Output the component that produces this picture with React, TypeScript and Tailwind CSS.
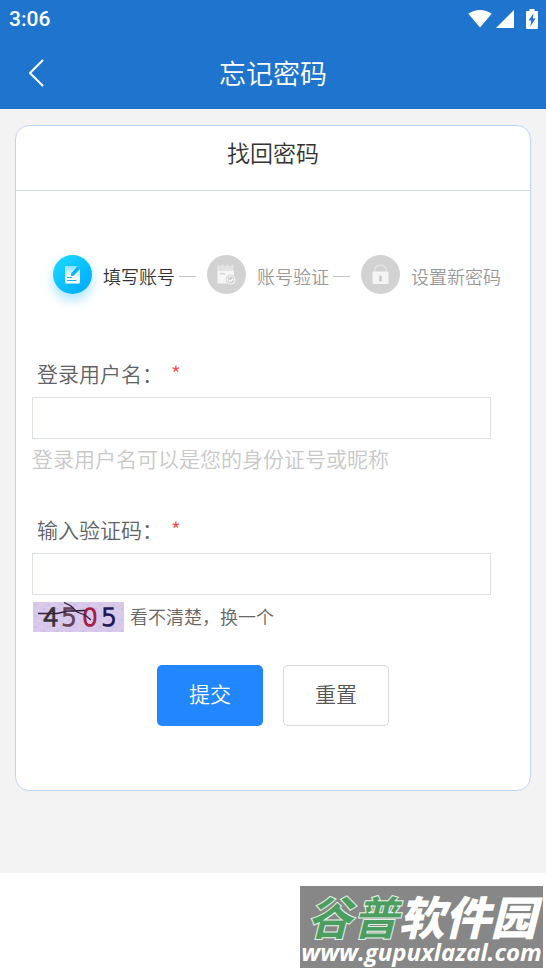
import { useState } from "react";
import type { ReactNode } from "react";

function WifiIcon() {
  return (
    <svg width="24" height="19" viewBox="0 0 24 19" aria-hidden="true">
      <path d="M0.3 4.8C7-.4 17-.4 23.7 4.8L12 18.6Z" fill="#fff" />
    </svg>
  );
}

function SignalIcon() {
  return (
    <svg width="18" height="18" viewBox="0 0 18 18" aria-hidden="true">
      <path d="M18 0V18H0Z" fill="#fff" />
    </svg>
  );
}

function BatteryIcon() {
  return (
    <svg width="12" height="20" viewBox="0 0 12 20" aria-hidden="true">
      <path d="M3.500 0h5v2H11q1 0 1 1v16q0 1-1 1H1q-1 0-1-1V3q0-1 1-1h2.500Z" fill="#fff" />
      <path d="M7.500 4.500L2.500 11.500H5.300L4.300 17.500L9.500 9.500H6.800Z" fill="#1f75cd" />
    </svg>
  );
}

function WriteIcon() {
  return (
    <svg width="39" height="39" viewBox="0 0 39 39" aria-hidden="true">
      <defs>
        <linearGradient id="paper" x1="0" y1="0" x2="0" y2="1">
          <stop offset="0" stopColor="#fff" stopOpacity="0.5" />
          <stop offset="0.65" stopColor="#fff" />
        </linearGradient>
      </defs>
      <path d="M13 11H24.500L18 18.500V21H20.500L27 14V27q0 1.500-1.500 1.500H13.500Q12 28.500 12 27V12q0-1 1-1Z" fill="url(#paper)" />
      <path d="M19.500 19L25 13.300" stroke="#18a8ee" strokeWidth="2" />
      <path d="M14 22.500h5M14 25.500h9.500" stroke="#12b4f5" strokeWidth="1.200" />
    </svg>
  );
}

function VerifyIcon() {
  return (
    <svg width="39" height="39" viewBox="0 0 39 39" aria-hidden="true">
      <path d="M10.500 9.500l2.500 1.800 2.500-1.800 2.500 1.800 2.500-1.800 2.500 1.800 2-1.800 1.500 1V15h-16.500Z" fill="#e3e3e3" />
      <path d="M10.500 15.500h16.500v5.200a4.600 4.600 0 0 0-6.600 7.800H11.500q-1 0-1-1Z" fill="#f6f6f6" />
      <path d="M13 18.800h5" stroke="#cfcfcf" strokeWidth="1.300" />
      <circle cx="24" cy="25" r="4" fill="#d2d2d2" stroke="#f8f8f8" strokeWidth="1.200" />
      <path d="M22 25l1.500 1.500 2.700-2.900" fill="none" stroke="#fff" strokeWidth="1.200" />
    </svg>
  );
}

function LockIcon() {
  return (
    <svg width="39" height="39" viewBox="0 0 39 39" aria-hidden="true">
      <path d="M13.500 17v-1.200a6 5.600 0 0 1 12 0V17" fill="none" stroke="#e6e6e6" strokeWidth="1.300" />
      <rect x="11.500" y="16.500" width="16" height="12.500" rx="1" fill="#f4f4f4" />
      <rect x="18.300" y="20.500" width="2.400" height="6" rx="1.200" fill="#c4c4c4" />
    </svg>
  );
}

function CaptchaImage() {
  return (
    <svg width="91" height="30" viewBox="0 0 91 30" role="img" aria-label="验证码">
      <defs>
        <pattern id="noise" width="13" height="11" patternUnits="userSpaceOnUse">
          <rect x="1" y="2" width="3" height="2" fill="#cfc0e6" />
          <rect x="7" y="1" width="2" height="3" fill="#e2c9e6" />
          <rect x="4" y="7" width="3" height="2" fill="#dccfef" />
          <rect x="10" y="6" width="2" height="2" fill="#cbc2e3" />
        </pattern>
      </defs>
      <rect width="91" height="30" fill="#d8c8ea" />
      <rect width="91" height="30" fill="url(#noise)" />
      <g className="font-['DejaVu_Sans'] text-[25px]" strokeWidth="1.5">
        <text x="10" y="24" fill="#3a353c" stroke="#3a353c">4</text>
        <text x="28" y="24" fill="#684158" stroke="#684158">5</text>
        <text x="49" y="24" fill="#a32044" stroke="#a32044">0</text>
        <text x="68" y="24" fill="#241956" stroke="#241956">5</text>
      </g>
      <path d="M5 11.500H24L35 9L52 8.500M31 0.500L38 4L44 10L52 13L58 18" fill="none" stroke="#30203c" strokeWidth="1.300" />
    </svg>
  );
}

type Step = { label: string; icon: ReactNode; active: boolean };

const steps: Step[] = [
  { label: "填写账号", icon: <WriteIcon />, active: true },
  { label: "账号验证", icon: <VerifyIcon />, active: false },
  { label: "设置新密码", icon: <LockIcon />, active: false },
];

function Field({ id, label, value, onChange }: { id: string; label: string; value: string; onChange: (v: string) => void }) {
  return (
    <div>
      <label htmlFor={id} className="flex gap-2 pl-[5px] text-[21px] leading-6 text-[#606266]">
        {label}
        <span className="text-[#ff4949]">*</span>
      </label>
      <input
        id={id}
        type="text"
        required
        value={value}
        onChange={(e) => onChange(e.target.value)}
        className="mt-3 block h-[42px] w-full border border-[#dcdfe6] bg-white px-3 text-[21px] text-[#606266] outline-none"
      />
    </div>
  );
}

export default function App() {
  const [username, setUsername] = useState("");
  const [code, setCode] = useState("");

  const reset = () => {
    setUsername("");
    setCode("");
  };

  return (
    <div className="flex min-h-screen flex-col bg-white font-['Noto_Sans_CJK_SC',sans-serif] font-[350]">
      <header className="bg-[#1f75cd] text-white">
        <div className="flex h-[37px] items-center justify-between pr-2 pl-[9px]">
          <span className="font-['Roboto',sans-serif] text-[21px] leading-6 font-medium">3:06</span>
          <div className="flex items-center gap-1">
            <WifiIcon />
            <SignalIcon />
            <div className="pl-2">
              <BatteryIcon />
            </div>
          </div>
        </div>
        <div className="grid h-[72px] grid-cols-[72px_1fr_72px] items-center">
          <button type="button" aria-label="返回" className="flex justify-center">
            <svg width="16" height="28" viewBox="0 0 16 28" aria-hidden="true">
              <path d="M14.500 1.500L2 14L14.500 26.500" fill="none" stroke="#fff" strokeWidth="2" strokeLinecap="round" strokeLinejoin="round" />
            </svg>
          </button>
          <h1 className="text-center text-[27px] leading-9">忘记密码</h1>
        </div>
      </header>

      <main className="flex-1 bg-[#f3f3f3] px-[15px] pt-4 pb-[82px]">
        <section className="rounded-[14px] border border-[#bcd6fb] bg-white">
          <h2 className="border-b border-[#d5dbe8] pt-3 pb-6 text-center text-[23px] leading-7 text-[#333]">
            找回密码
          </h2>

          <ol className="flex pt-16 pl-[37px]">
            {steps.map((step, i) => (
              <li key={step.label} className="flex items-center">
                <span
                  className={
                    step.active
                      ? "size-[39px] shrink-0 rounded-full bg-linear-to-br from-[#1fdcfb] to-[#04a6ff] shadow-[0_6px_12px_rgba(0,180,255,0.35)]"
                      : "size-[39px] shrink-0 rounded-full bg-[#d2d2d2]"
                  }
                >
                  {step.icon}
                </span>
                <span
                  className={
                    step.active
                      ? "pt-0.5 pl-[11px] text-lg leading-6 whitespace-nowrap text-[#333]"
                      : "pt-0.5 pl-[11px] text-lg leading-6 whitespace-nowrap text-[#999]"
                  }
                >
                  {step.label}
                </span>
                {i < steps.length - 1 && <span className="mt-1 mr-[11px] ml-1 h-px w-[17px] bg-[#c4c4c4]" />}
              </li>
            ))}
          </ol>

          <form className="pt-[67px] pr-[39px] pb-16 pl-4" onSubmit={(e) => e.preventDefault()}>
            <Field id="username" label="登录用户名：" value={username} onChange={setUsername} />
            <p className="mt-[7px] mb-[47px] text-[21px] leading-6 text-[#c8c8c8]">登录用户名可以是您的身份证号或昵称</p>

            <Field id="code" label="输入验证码：" value={code} onChange={setCode} />
            <div className="mt-[7px] flex items-start gap-[6px] pl-px">
              <CaptchaImage />
              <button type="button" className="text-lg leading-7 text-[#666]">
                看不清楚，换一个
              </button>
            </div>

            <div className="mt-[33px] flex justify-center gap-5 pl-[23px]">
              <button type="submit" className="h-[61px] w-[106px] rounded-[5px] bg-[#2286ff] pb-1 text-[21px] text-white">
                提交
              </button>
              <button
                type="button"
                onClick={reset}
                className="h-[61px] w-[106px] rounded-[5px] border border-[#d9d9d9] bg-white pb-1 text-[21px] text-[#555]"
              >
                重置
              </button>
            </div>
          </form>
        </section>
      </main>

      <footer className="flex h-[99px] justify-end pt-[13px] pr-[3px]">
        <div className="h-[82px] w-[243px] bg-[#878787] text-center whitespace-nowrap text-white italic">
          <p className="pt-1 text-[46px] leading-[50px] font-black">
            <span className="text-[#4b9d60] [-webkit-text-stroke:1px_#e3efe5]">谷普</span>软件园
          </p>
          <p className="font-['Open_Sans',sans-serif] text-[24px] leading-6 font-bold">www.gupuxlazal.com</p>
        </div>
      </footer>
    </div>
  );
}
